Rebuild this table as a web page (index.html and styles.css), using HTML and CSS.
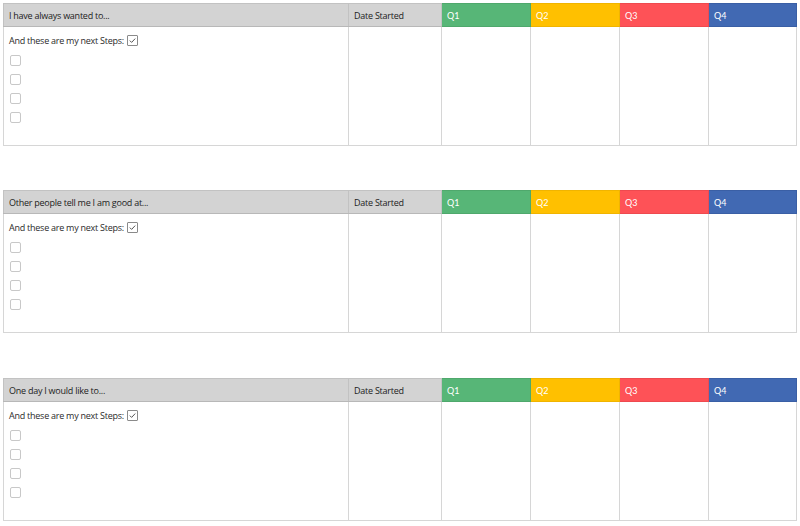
FILE: index.html
```html
<!DOCTYPE html>
<html>
<head>
<meta charset="utf-8">
<link rel="stylesheet" href="styles.css">
</head>
<body>
<div class="page">
  <table class="plan">
    <colgroup><col class="c-main"><col class="c-date"><col class="c-q"><col class="c-q"><col class="c-q"><col class="c-q4"></colgroup>
    <thead>
      <tr><th>I have always wanted to...</th><th>Date Started</th><th class="q1">Q1</th><th class="q2">Q2</th><th class="q3">Q3</th><th class="q4">Q4</th></tr>
    </thead>
    <tbody>
      <tr>
        <td class="main">
          <div class="steps">And these are my next Steps: <span class="box checked"><svg viewBox="0 0 11 11" width="11" height="11"><path d="M2.8 5.6 L4.6 7.4 L8.2 3.6" fill="none" stroke="#555" stroke-width="1"/></svg></span></div>
          <div class="boxes"><span class="box"></span><span class="box"></span><span class="box"></span><span class="box"></span></div>
        </td>
        <td></td><td></td><td></td><td></td><td></td>
      </tr>
    </tbody>
  </table>
  <table class="plan">
    <colgroup><col class="c-main"><col class="c-date"><col class="c-q"><col class="c-q"><col class="c-q"><col class="c-q4"></colgroup>
    <thead>
      <tr><th>Other people tell me I am good at...</th><th>Date Started</th><th class="q1">Q1</th><th class="q2">Q2</th><th class="q3">Q3</th><th class="q4">Q4</th></tr>
    </thead>
    <tbody>
      <tr>
        <td class="main">
          <div class="steps">And these are my next Steps: <span class="box checked"><svg viewBox="0 0 11 11" width="11" height="11"><path d="M2.8 5.6 L4.6 7.4 L8.2 3.6" fill="none" stroke="#555" stroke-width="1"/></svg></span></div>
          <div class="boxes"><span class="box"></span><span class="box"></span><span class="box"></span><span class="box"></span></div>
        </td>
        <td></td><td></td><td></td><td></td><td></td>
      </tr>
    </tbody>
  </table>
  <table class="plan">
    <colgroup><col class="c-main"><col class="c-date"><col class="c-q"><col class="c-q"><col class="c-q"><col class="c-q4"></colgroup>
    <thead>
      <tr><th>One day I would like to...</th><th>Date Started</th><th class="q1">Q1</th><th class="q2">Q2</th><th class="q3">Q3</th><th class="q4">Q4</th></tr>
    </thead>
    <tbody>
      <tr>
        <td class="main">
          <div class="steps">And these are my next Steps: <span class="box checked"><svg viewBox="0 0 11 11" width="11" height="11"><path d="M2.8 5.6 L4.6 7.4 L8.2 3.6" fill="none" stroke="#555" stroke-width="1"/></svg></span></div>
          <div class="boxes"><span class="box"></span><span class="box"></span><span class="box"></span><span class="box"></span></div>
        </td>
        <td></td><td></td><td></td><td></td><td></td>
      </tr>
    </tbody>
  </table>
</div>
</body>
</html>
```
FILE: styles.css
```css
html, body { margin: 0; padding: 0; background: #fff; }
body { font-family: "Open Sans", "Noto Sans", sans-serif; font-size: 9px; letter-spacing: -0.25px; color: #2a2a2a; }
.page { padding: 3px 4px 0 3px; display: flex; flex-direction: column; gap: 44px; }
.plan { border-collapse: collapse; table-layout: fixed; width: 793px; }
.plan:nth-child(3) { margin-top: 1px; }
.c-main { width: 345px; }
.c-date { width: 93px; }
.c-q { width: 89px; }
.c-q4 { width: 88px; }
.plan th { height: 23px; padding: 0 0 0 5px; box-sizing: border-box; background: #d3d3d3; border: 1px solid #c2c2c2; border-bottom: 1px solid #b8b8b8; text-align: left; font-weight: normal; color: #222; }
.plan th.q1 { background: #57b677; border-color: #4fa86c; color: #fff; font-family: Lato, sans-serif; letter-spacing: 0; }
.plan th.q2 { background: #ffc000; border-color: #f0b400; color: #fff; font-family: Lato, sans-serif; letter-spacing: 0; }
.plan th.q3 { background: #fe5257; border-color: #ee4a4f; color: #fff; font-family: Lato, sans-serif; letter-spacing: 0; }
.plan th.q4 { background: #4169b3; border-color: #3a5fa5; color: #fff; font-family: Lato, sans-serif; letter-spacing: 0; }
.plan td { height: 119px; border: 1px solid #d6d6d6; vertical-align: top; padding: 0; box-sizing: border-box; }
.plan td.main { padding: 6px 0 0 5px; }
.steps { display: flex; align-items: center; gap: 3px; height: 14px; }
.boxes { display: flex; flex-direction: column; gap: 8px; padding: 8px 0 0 1px; }
.box { display: inline-block; width: 11px; height: 11px; box-sizing: border-box; border: 1px solid #c8c8c8; border-radius: 2px; background: #fff; }
.box.checked { border-color: #8a8a8a; border-radius: 1px; position: relative; }
.box.checked svg { position: absolute; left: -1px; top: -1px; }
```
